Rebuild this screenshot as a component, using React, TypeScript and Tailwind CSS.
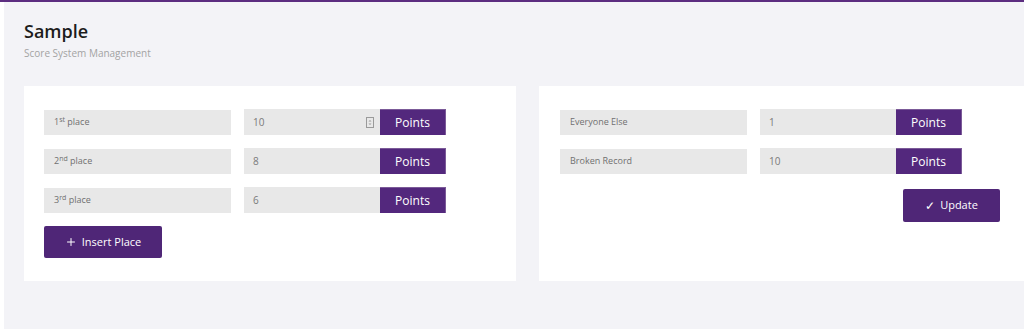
import { Plus } from 'lucide-react'

interface IRowProps {
  label: React.ReactNode
  value: string
  spinner?: boolean
}

function Spinner() {
  return (
    <svg width="8" height="11" viewBox="0 0 8 11" className="text-[#9a9a9a]">
      <rect x="0.5" y="0.5" width="7" height="10" fill="none" stroke="currentColor" />
      <path d="M2.5 4.5 L4 3 L5.5 4.5 Z" fill="currentColor" />
      <path d="M2.5 6.5 L4 8 L5.5 6.5 Z" fill="currentColor" />
    </svg>
  )
}

function ScoreRow({ label, value, spinner }: IRowProps) {
  return (
    <div className="flex items-center h-[26px]">
      <div className="w-[187px] h-[25px] bg-[#e8e8e8] flex items-center pl-[10px] text-[9px] text-[#707070]">
        {label}
      </div>
      <div className="ml-[13px] w-[136px] h-[26px] bg-[#e8e8e8] flex items-center justify-between pl-[9px] pr-[6px] text-[10px] text-[#7a7a7a]">
        <span>{value}</span>
        {spinner ? <Spinner /> : null}
      </div>
      <div className="w-[66px] h-[26px] bg-[#53287d] border-r border-t border-[#7b5a98] flex items-center justify-center text-[12px] text-white">
        Points
      </div>
    </div>
  )
}

function Place({ n, suffix }: { n: number; suffix: string }) {
  return (
    <span>
      {n}
      <sup className="text-[7px] -top-[3px]">{suffix}</sup> place
    </span>
  )
}

export default function App() {
  return (
    <div
      className="w-[1024px] h-[331px] flex bg-white border-t-2 border-[#5c2d80] overflow-hidden"
      style={{ fontFamily: '"Open Sans", "Liberation Sans", sans-serif' }}
    >
      <div className="w-[4px] shrink-0 bg-white" />
      <main className="flex-1 h-[327px] bg-[#f3f3f7] pl-[20px] overflow-hidden">
        <header className="pt-[17px] h-[84px]">
          <h1 className="text-[18px] font-semibold text-[#1c1c1c] leading-[24px]">Sample</h1>
          <p className="mt-[3px] text-[10px] text-[#a3a3a3]">Score System Management</p>
        </header>
        <div className="flex gap-[23px] w-[1100px]">
          <section className="w-[492px] h-[195px] bg-white px-[20px] pt-[23px] flex flex-col gap-[13px]">
            <ScoreRow label={<Place n={1} suffix="st" />} value="10" spinner />
            <ScoreRow label={<Place n={2} suffix="nd" />} value="8" />
            <ScoreRow label={<Place n={3} suffix="rd" />} value="6" />
            <button className="w-[118px] h-[32px] rounded-[2px] bg-[#4f2677] text-white text-[11px] flex items-center justify-center gap-[5px]">
              <Plus size={12} strokeWidth={2} />
              Insert Place
            </button>
          </section>
          <section className="w-[492px] h-[195px] bg-white pl-[21px] pt-[23px] flex flex-col gap-[13px]">
            <ScoreRow label="Everyone Else" value="1" />
            <ScoreRow label="Broken Record" value="10" />
            <div className="w-[440px] flex justify-end mt-[2px]">
              <button className="w-[97px] h-[33px] rounded-[2px] bg-[#4f2677] text-white text-[11px] flex items-center justify-center gap-[5px]">
                <span className="text-[12px]">✓</span>
                Update
              </button>
            </div>
          </section>
        </div>
      </main>
    </div>
  )
}
